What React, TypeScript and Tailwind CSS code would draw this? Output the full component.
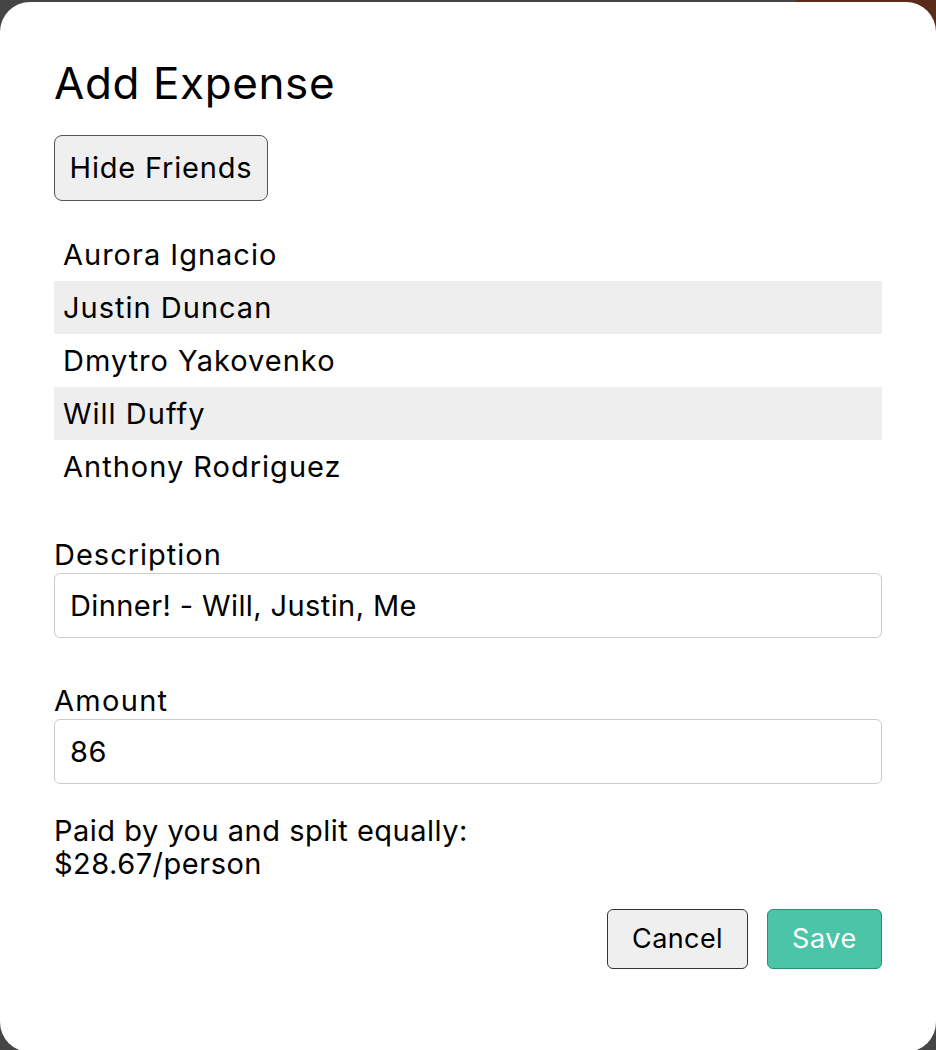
const FRIENDS = ['Aurora Ignacio', 'Justin Duncan', 'Dmytro Yakovenko', 'Will Duffy', 'Anthony Rodriguez']

export default function App() {
  return (
    <div className="relative h-[1050px] w-[936px] overflow-hidden bg-[#454545] pt-[2px] font-['Inter',sans-serif] text-black">
      <div className="absolute right-0 top-0 h-[60px] w-[140px] bg-[#5a2a1b]" />
      <div className="relative flex h-[1050px] flex-col rounded-[30px] bg-white px-[54px] pt-[55px]">
        <h1 className="text-[44px] leading-[52px] tracking-[0.6px]">Add Expense</h1>

        <button className="mt-[26px] h-[66px] w-[214px] rounded-[8px] border border-[#555] bg-[#efefef] text-[29px] tracking-[0.8px]">
          Hide Friends
        </button>

        <ul className="mt-[27px] w-[828px]">
          {FRIENDS.map((name, i) => (
            <li
              key={name}
              className={`flex h-[53px] items-center px-[9px] text-[29px] tracking-[1px] ${i % 2 === 1 ? 'bg-[#eeeeee]' : ''}`}
            >
              {name}
            </li>
          ))}
        </ul>

        <label className="mt-[46px] text-[29px] leading-[32px] tracking-[1px]">Description</label>
        <div className="mt-[2px] flex h-[65px] w-[828px] items-center rounded-[6px] border border-[#cccccc] px-[15px] text-[29px] tracking-[0.4px]">
          Dinner! - Will, Justin, Me
        </div>

        <label className="mt-[47px] text-[29px] leading-[32px] tracking-[1.3px]">Amount</label>
        <div className="mt-[2px] flex h-[65px] w-[828px] items-center rounded-[6px] border border-[#cccccc] px-[15px] text-[29px] tracking-[0.6px]">
          86
        </div>

        <p className="mt-[30px] text-[29px] leading-[33px] tracking-[0.5px]">
          Paid by you and split equally:
          <br />
          $28.67/person
        </p>

        <div className="mt-[29px] flex w-[828px] justify-end gap-[19px]">
          <button className="h-[60px] w-[141px] rounded-[6px] border border-[#333] bg-[#efefef] text-[27px] tracking-[0.4px]">
            Cancel
          </button>
          <button className="h-[60px] w-[115px] rounded-[6px] border border-[#2c8f74] bg-[#4bc4a7] text-[27px] tracking-[0.6px] text-white">
            Save
          </button>
        </div>
      </div>
    </div>
  )
}
